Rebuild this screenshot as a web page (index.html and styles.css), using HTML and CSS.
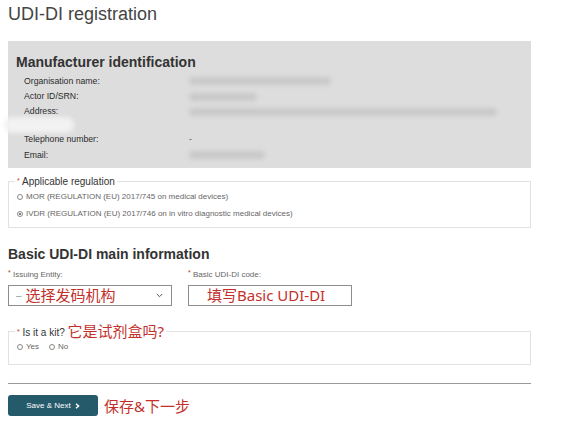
FILE: index.html
```html
<!DOCTYPE html>
<html lang="en">
<head>
<meta charset="utf-8">
<title>UDI-DI registration</title>
<link rel="stylesheet" href="styles.css">
</head>
<body>
<main class="page">
  <h1 class="title">UDI-DI registration</h1>

  <section class="mfr">
    <h2 class="mfr-title">Manufacturer identification</h2>
    <div class="mfr-grid">
      <div class="lbl">Organisation name:</div>
      <div class="val"><span class="blur w142"></span></div>
      <div class="lbl">Actor ID/SRN:</div>
      <div class="val"><span class="blur w68"></span></div>
      <div class="lbl addr">Address:</div>
      <div class="val addr"><span class="blur w308"></span></div>
      <div class="lbl">Telephone number:</div>
      <div class="val">-</div>
      <div class="lbl">Email:</div>
      <div class="val"><span class="blur w76"></span></div>
    </div>
    <span class="redact"></span>
  </section>

  <fieldset class="group reg">
    <legend class="legend"><span class="req">*</span> Applicable regulation</legend>
    <div class="opt"><span class="radio"></span>MOR (REGULATION (EU) 2017/745 on medical devices)</div>
    <div class="opt"><span class="radio checked"></span>IVDR (REGULATION (EU) 2017/746 on in vitro diagnostic medical devices)</div>
  </fieldset>

  <h2 class="section-title">Basic UDI-DI main information</h2>
  <div class="fields">
    <div class="field">
      <div class="flabel"><span class="req">*</span> Issuing Entity:</div>
      <div class="control select">
        <span class="dash">–</span>
        <span class="note">选择发码机构</span>
        <svg class="chev" width="7" height="5" viewBox="0 0 7 5"><path d="M0.8 1 L3.5 3.7 L6.2 1" fill="none" stroke="#555" stroke-width="1"/></svg>
      </div>
    </div>
    <div class="field">
      <div class="flabel"><span class="req">*</span> Basic UDI-DI code:</div>
      <div class="control input"><span class="note">填写Basic UDI-DI</span></div>
    </div>
  </div>

  <fieldset class="group kit">
    <legend class="legend kit-legend"><span class="req">*</span> Is it a kit? <span class="note">它是试剂盒吗?</span></legend>
    <div class="opts-inline">
      <span class="opt"><span class="radio"></span>Yes</span>
      <span class="opt"><span class="radio"></span>No</span>
    </div>
  </fieldset>

  <hr class="rule">

  <div class="actions">
    <button class="btn" type="button">Save &amp; Next
      <svg width="5" height="6" viewBox="0 0 5 6"><path d="M1 0.8 L3.6 3 L1 5.2" fill="none" stroke="#fff" stroke-width="1.4"/></svg>
    </button>
    <span class="note">保存&amp;下一步</span>
  </div>
</main>
</body>
</html>
```
FILE: styles.css
```css
html, body {
  margin: 0;
  padding: 0;
  background: #fff;
}
body {
  font-family: "Liberation Sans", Arial, sans-serif;
  color: #333;
}
.page {
  width: 523px;
  padding: 0 34px 0 8px;
}
.title {
  margin: 4px 0 0;
  font-size: 18px;
  line-height: 21px;
  font-weight: normal;
  color: #444;
}
.mfr {
  position: relative;
  margin-top: 16px;
  background: #dddddd;
  padding: 13px 8px 5px 8px;
}
.mfr-title {
  margin: 0;
  font-size: 14px;
  line-height: 16px;
  font-weight: bold;
  color: #333;
}
.mfr-grid {
  display: grid;
  grid-template-columns: 165px 1fr;
  margin-top: 3.5px;
  padding-left: 8px;
  font-size: 8.7px;
  line-height: 15.4px;
  color: #2b2b2b;
}
.lbl.addr, .val.addr {
  height: 28px;
}
.val {
  color: #555;
  display: flex;
  align-items: center;
  height: 15.4px;
}
.val.addr {
  align-items: flex-start;
  padding-top: 4px;
  box-sizing: border-box;
}
.blur {
  display: inline-block;
  height: 8px;
  background: #c9c9c9;
  border-radius: 4px;
  filter: blur(2px);
}
.w142 { width: 142px; }
.w68 { width: 68px; }
.w308 { width: 308px; }
.w76 { width: 76px; }
.redact {
  position: absolute;
  left: -4px;
  top: 76px;
  width: 70px;
  height: 16px;
  border-radius: 8px;
  background: #f2f2f2;
  filter: blur(2.5px);
}
.group {
  margin: 0;
  border: 1px solid #e2e2e2;
  padding: 0 8px 5px 8px;
  min-width: 0;
}
.reg {
  margin-top: 7px;
}
.legend {
  margin-left: -2px;
  padding: 0 2px;
  font-size: 10px;
  line-height: 12px;
  color: #333;
}
.req {
  color: #c0392b;
  font-size: 7px;
  vertical-align: 2px;
}
.opt {
  display: flex;
  align-items: center;
  font-size: 8px;
  line-height: 17px;
  color: #666;
}
.radio {
  display: inline-block;
  box-sizing: border-box;
  width: 6px;
  height: 6px;
  border: 1px solid #8a8a8a;
  border-radius: 50%;
  margin-right: 3px;
  position: relative;
  background: #fff;
}
.radio.checked::after {
  content: "";
  position: absolute;
  left: 1px;
  top: 1px;
  width: 2px;
  height: 2px;
  border-radius: 50%;
  background: #555;
}
.section-title {
  margin: 18px 0 0;
  font-size: 14px;
  line-height: 16px;
  font-weight: bold;
  color: #333;
}
.fields {
  display: flex;
  gap: 16px;
  margin-top: 6px;
}
.field {
  width: 164px;
}
.flabel {
  font-size: 8px;
  line-height: 10px;
  color: #666;
}
.control {
  margin-top: 5px;
  box-sizing: border-box;
  height: 21px;
  border: 1px solid #8c8c8c;
  display: flex;
  align-items: center;
  background: #fff;
}
.select {
  padding: 0 8px 0 7px;
}
.dash {
  color: #999;
  font-size: 10px;
  margin-right: 4px;
}
.chev {
  margin-left: auto;
}
.input {
  padding-left: 18px;
}
.note {
  font-family: "Noto Sans", "Noto Sans CJK SC", sans-serif;
  font-size: 15px;
  line-height: 17px;
  color: #c3302b;
}
.kit {
  margin-top: 17px;
  padding-bottom: 10px;
}
.kit-legend .note {
  vertical-align: -1px;
}
.opts-inline {
  display: flex;
  gap: 10px;
  margin-top: 0;
}
.opts-inline .opt {
  line-height: 14px;
}
.rule {
  margin: 18px 0 0;
  border: 0;
  border-top: 1px solid #999;
  height: 0;
}
.actions {
  margin-top: 11px;
  display: flex;
  align-items: center;
  gap: 6px;
}
.btn {
  width: 90px;
  height: 21px;
  border: 0;
  border-radius: 3px;
  background: #255a6b;
  color: #fff;
  font-family: "Liberation Sans", Arial, sans-serif;
  font-size: 8px;
  display: flex;
  align-items: center;
  justify-content: center;
  gap: 4px;
  padding: 0;
}
.actions .note {
  margin-top: 2px;
}
```
